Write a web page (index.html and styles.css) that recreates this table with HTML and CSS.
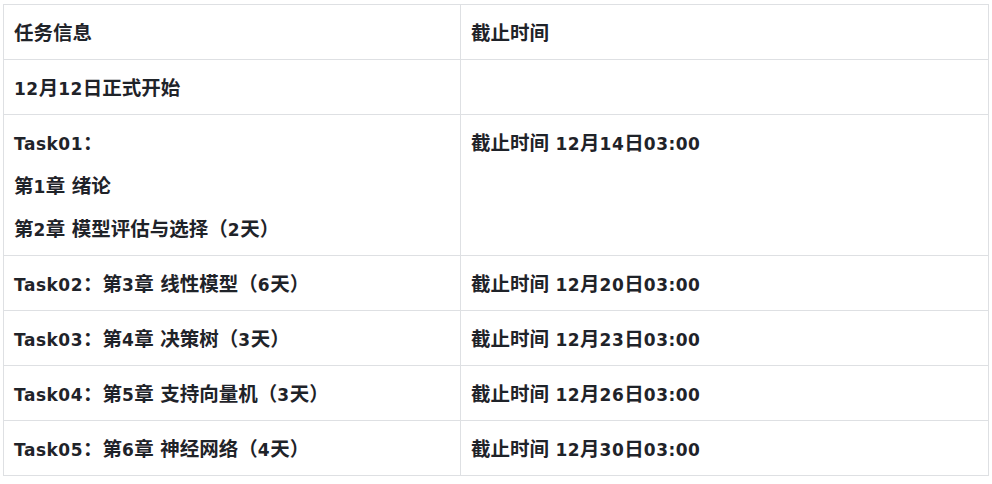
FILE: index.html
```html
<!DOCTYPE html>
<html lang="zh-CN">
<head>
<meta charset="utf-8">
<title>任务信息</title>
<link rel="stylesheet" href="styles.css">
</head>
<body>
<table class="schedule">
  <colgroup>
    <col class="col-task">
    <col class="col-deadline">
  </colgroup>
  <tbody>
    <tr>
      <td><p><span class="zh">任务信息</span></p></td>
      <td><p><span class="zh">截止时间</span></p></td>
    </tr>
    <tr>
      <td><p>12<span class="zh">月</span>12<span class="zh">日正式开始</span></p></td>
      <td></td>
    </tr>
    <tr>
      <td>
        <p>Task01<span class="zh">：</span></p>
        <p><span class="zh">第</span>1<span class="zh">章</span> <span class="zh">绪论</span></p>
        <p><span class="zh">第</span>2<span class="zh">章</span> <span class="zh">模型评估与选择（</span>2<span class="zh">天）</span></p>
      </td>
      <td><p><span class="zh">截止时间</span> 12<span class="zh">月</span>14<span class="zh">日</span>03:00</p></td>
    </tr>
    <tr>
      <td><p>Task02<span class="zh">：第</span>3<span class="zh">章</span> <span class="zh">线性模型（</span>6<span class="zh">天）</span></p></td>
      <td><p><span class="zh">截止时间</span> 12<span class="zh">月</span>20<span class="zh">日</span>03:00</p></td>
    </tr>
    <tr>
      <td><p>Task03<span class="zh">：第</span>4<span class="zh">章</span> <span class="zh">决策树（</span>3<span class="zh">天）</span></p></td>
      <td><p><span class="zh">截止时间</span> 12<span class="zh">月</span>23<span class="zh">日</span>03:00</p></td>
    </tr>
    <tr>
      <td><p>Task04<span class="zh">：第</span>5<span class="zh">章</span> <span class="zh">支持向量机（</span>3<span class="zh">天）</span></p></td>
      <td><p><span class="zh">截止时间</span> 12<span class="zh">月</span>26<span class="zh">日</span>03:00</p></td>
    </tr>
    <tr>
      <td><p>Task05<span class="zh">：第</span>6<span class="zh">章</span> <span class="zh">神经网络（</span>4<span class="zh">天）</span></p></td>
      <td><p><span class="zh">截止时间</span> 12<span class="zh">月</span>30<span class="zh">日</span>03:00</p></td>
    </tr>
  </tbody>
</table>
</body>
</html>
```
FILE: styles.css
```css
html, body {
  margin: 0;
  background: #ffffff;
}
body {
  padding: 4px 4px 0 3px;
  font-family: "DejaVu Sans", "Noto Sans CJK SC", sans-serif;
  font-weight: bold;
  font-size: 17px;
  letter-spacing: 0.5px;
  color: #1f2329;
}
.schedule {
  border-collapse: collapse;
  table-layout: fixed;
  width: 985px;
}
.col-task { width: 457px; }
.col-deadline { width: 528px; }
.schedule td {
  border: 1px solid #dee0e3;
  padding: 16px 11px 12px 10px;
  vertical-align: top;
}
.schedule p {
  margin: 0;
  height: 26px;
  line-height: 26px;
  white-space: nowrap;
}
.schedule p + p {
  margin-top: 17px;
}
.zh {
  font-family: "Noto Sans CJK SC", sans-serif;
  font-size: 19.5px;
  line-height: 18px;
  letter-spacing: 0;
}
```
